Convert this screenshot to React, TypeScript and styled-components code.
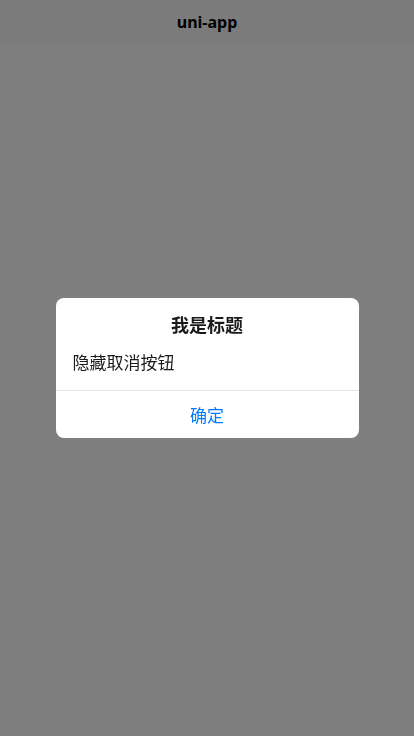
import styled, { createGlobalStyle } from "styled-components";

const GlobalStyle = createGlobalStyle`
  html, body {
    margin: 0;
    padding: 0;
    height: 100%;
    background: #ffffff;
    font-family: "Noto Sans", "Noto Sans CJK SC", sans-serif;
  }
  #root {
    height: 100%;
  }
`;

const Page = styled.div`
  position: relative;
  width: 100%;
  height: 100%;
  display: flex;
  flex-direction: column;
`;

const NavBar = styled.header`
  height: 44px;
  flex-shrink: 0;
  display: flex;
  align-items: center;
  justify-content: center;
  background: #f7f7f7;
  color: #000000;
  font-size: 16px;
  font-weight: 700;
`;

const Mask = styled.div`
  position: fixed;
  inset: 0;
  background: rgba(0, 0, 0, 0.5);
  display: flex;
  align-items: center;
  justify-content: center;
`;

const Dialog = styled.div`
  width: 303px;
  background: #ffffff;
  border-radius: 8px;
  overflow: hidden;
  display: flex;
  flex-direction: column;
`;

const Title = styled.div`
  padding: 15px 17px 0;
  text-align: center;
  font-size: 18px;
  line-height: 24px;
  font-weight: 700;
  color: #1a1a1a;
`;

const Content = styled.div`
  padding: 14px 17px 15px;
  font-size: 17px;
  line-height: 24px;
  color: #1a1a1a;
  border-bottom: 1px solid #e5e5e5;
`;

const Footer = styled.div`
  display: flex;
`;

const Action = styled.button<{ $primary?: boolean }>`
  flex: 1;
  height: 47px;
  border: none;
  background: transparent;
  font-family: inherit;
  font-size: 17px;
  color: ${(p) => (p.$primary ? "#007aff" : "#000000")};
  cursor: pointer;
`;

export default function App() {
  return (
    <>
      <GlobalStyle />
      <Page>
        <NavBar>uni-app</NavBar>
        <Mask>
          <Dialog>
            <Title>我是标题</Title>
            <Content>隐藏取消按钮</Content>
            <Footer>
              <Action $primary>确定</Action>
            </Footer>
          </Dialog>
        </Mask>
      </Page>
    </>
  );
}
